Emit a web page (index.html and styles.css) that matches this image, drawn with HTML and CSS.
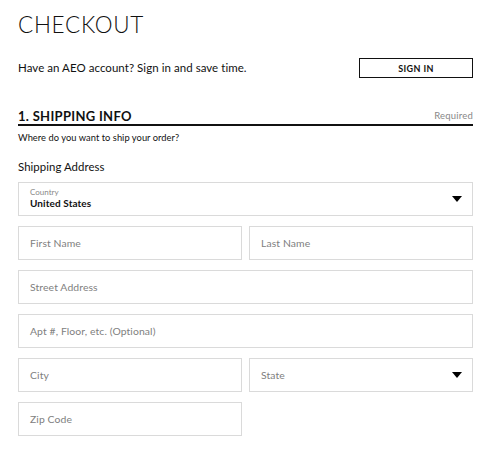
FILE: index.html
```html
<!DOCTYPE html>
<html>
<head>
<meta charset="utf-8">
<link rel="stylesheet" href="styles.css">
</head>
<body>
<main class="page">
  <h1 class="title">CHECKOUT</h1>
  <div class="account">
    <p class="account-text">Have an AEO account? Sign in and save time.</p>
    <button class="signin">SIGN IN</button>
  </div>
  <div class="section-head">
    <h2 class="section-title">1. SHIPPING INFO</h2>
    <span class="required">Required</span>
  </div>
  <p class="hint">Where do you want to ship your order?</p>
  <p class="group-label">Shipping Address</p>
  <div class="form">
    <div class="field select full">
      <div class="select-text">
        <span class="mini-label">Country</span>
        <span class="value">United States</span>
      </div>
      <svg class="caret" width="10" height="6" viewBox="0 0 10 6"><path d="M0 0H10L5 6Z" fill="#000"/></svg>
    </div>
    <div class="field"><span class="ph">First Name</span></div>
    <div class="field"><span class="ph">Last Name</span></div>
    <div class="field full"><span class="ph">Street Address</span></div>
    <div class="field full"><span class="ph">Apt #, Floor, etc. (Optional)</span></div>
    <div class="field"><span class="ph">City</span></div>
    <div class="field select"><span class="ph">State</span>
      <svg class="caret" width="10" height="6" viewBox="0 0 10 6"><path d="M0 0H10L5 6Z" fill="#000"/></svg>
    </div>
    <div class="field"><span class="ph">Zip Code</span></div>
  </div>
</main>
</body>
</html>
```
FILE: styles.css
```css
* { box-sizing: border-box; }
html, body { margin: 0; padding: 0; background: #fff; }
body { font-family: "Lato", "Open Sans", sans-serif; color: #111; }
.page { width: 455px; margin-left: 18px; padding-top: 11px; }
.title { margin: 0; font-size: 22.5px; font-weight: 300; letter-spacing: 0.7px; line-height: 27px; color: #111; }
.account { display: flex; justify-content: space-between; align-items: center; margin-top: 20px; }
.account-text { margin: 0; font-size: 11.5px; line-height: 14px; letter-spacing: 0.05px; }
.signin { width: 114px; height: 20px; border: 1.5px solid #111; background: #fff; font-family: inherit; font-weight: 700; font-size: 9px; letter-spacing: 0.4px; padding: 0; color: #111; }
.section-head { display: flex; justify-content: space-between; align-items: flex-end; margin-top: 30px; border-bottom: 2px solid #111; }
.section-title { margin: 0; font-size: 13px; font-weight: 700; line-height: 16px; letter-spacing: 0.3px; }
.required { font-size: 9.5px; color: #888; line-height: 12px; letter-spacing: 0.2px; padding-bottom: 2px; }
.hint { margin: 6px 0 0; font-size: 9.3px; line-height: 12px; letter-spacing: 0.05px; }
.group-label { margin: 16px 0 0; font-size: 11.4px; line-height: 14px; letter-spacing: 0.05px; }
.form { display: grid; grid-template-columns: 224px 224px; column-gap: 7px; row-gap: 10px; margin-top: 8px; }
.field { height: 34px; border: 1px solid #dadada; display: flex; align-items: center; justify-content: space-between; padding: 0 10px 0 11px; }
.full { grid-column: 1 / 3; }
.ph { font-size: 10.4px; color: #808080; letter-spacing: 0.1px; }
.select-text { display: flex; flex-direction: column; }
.mini-label { font-size: 8px; color: #888; line-height: 9px; }
.value { font-size: 10px; font-weight: 700; line-height: 13px; letter-spacing: 0.1px; }
.caret { display: block; }
```
